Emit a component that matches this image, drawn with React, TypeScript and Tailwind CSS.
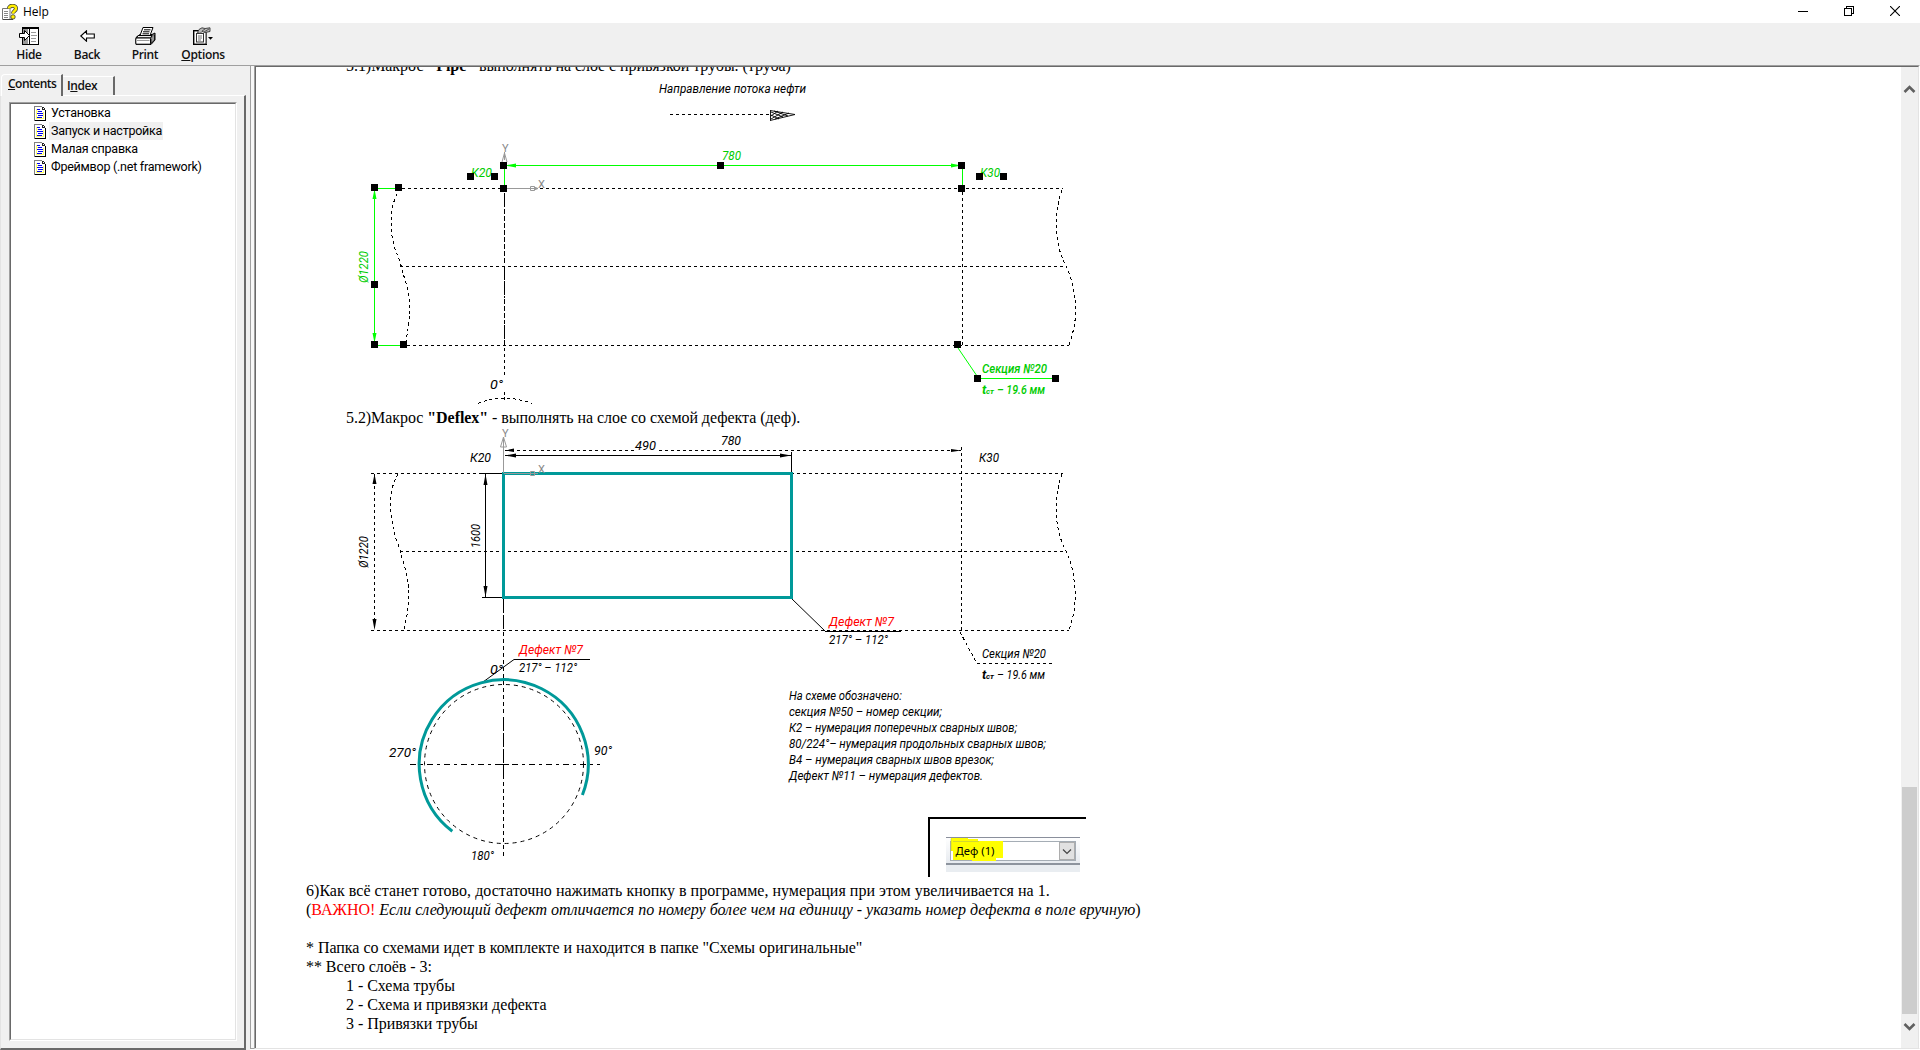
import React from "react";

const cad = { fontFamily: 'Roboto, "Liberation Sans", sans-serif' };

type LabelProps = {
  x: number;
  y: number;
  w: number;
  children: React.ReactNode;
  fill?: string;
  bold?: boolean;
  size?: number;
  transform?: string;
};

function Label({ x, y, w, children, fill = "#000", bold, size = 12.5, transform }: LabelProps) {
  return (
    <text
      x={x}
      y={y}
      textLength={w}
      lengthAdjust="spacingAndGlyphs"
      fill={fill}
      fontSize={size}
      fontStyle="italic"
      fontWeight={bold ? 500 : 400}
      transform={transform}
      style={cad}
    >
      {children}
    </text>
  );
}

function Handle({ x, y }: { x: number; y: number }) {
  return <rect x={x - 3.5} y={y - 3.5} width="7" height="7" fill="#000" shapeRendering="crispEdges" />;
}

function ThicknessLabel({ x, y, fill = "#000", bold }: { x: number; y: number; fill?: string; bold?: boolean }) {
  return (
    <g>
      <text x={x} y={y} fill={fill} fontSize="13" fontStyle="italic" fontWeight="700" style={cad}>t</text>
      <text x={x + 4} y={y} fill={fill} fontSize="7" fontStyle="italic" fontWeight="700" textLength="8" lengthAdjust="spacingAndGlyphs" style={cad}>ст</text>
      <Label x={x + 15} y={y} w={48} fill={fill} bold={bold}>– 19.6 мм</Label>
    </g>
  );
}

const handles = [
  [503.5, 165.5], [503.5, 188.5], [720.5, 165.5], [961.5, 165.5], [961.5, 188.5],
  [979.5, 176.5], [1003.5, 176.5], [470.5, 176.5], [494.5, 176.5], [374.5, 187.5],
  [398.5, 187.5], [374.5, 284.5], [374.5, 344.5], [403.5, 344.5], [957.5, 344.5],
  [977.5, 378.5], [1055.5, 378.5],
];

const G = "#00ff00";
const GT = "#00cc00";

function PipeDrawing() {
  return (
    <svg className="block ml-[84px]" width="760" height="333" viewBox="340 75 760 333">
      <Label x={659} y={93} w={147}>Направление потока нефти</Label>
      <g stroke="#000" fill="none" strokeDasharray="3 3" shapeRendering="crispEdges">
        <path d="M670 114.5H770" />
        <path d="M402 188.5H1063M400 266.5H1066M407 345.5H1069" />
        <path d="M962.5 192V345M504.5 348V376" />
        <path d="M397 194C389 210 389 235 397 254C402 266 403 275 407 286C412 305 410 318 406 341" />
        <path d="M1062 190C1053 215 1055 243 1064 262C1068 270 1071 277 1073 288C1077 307 1077 322 1069 345" />
        <path d="M478 403.5Q504 393 532 403.5" />
      </g>
      <path d="M504.5 193V208M504.5 266V298M504.5 325V346" stroke="#000" strokeDasharray="14 1" shapeRendering="crispEdges" />
      <path d="M504.5 209V265M504.5 299V324" stroke="#000" strokeDasharray="5 2" shapeRendering="crispEdges" />
      <path d="M504.5 392V400" stroke="#000" strokeDasharray="3 2" shapeRendering="crispEdges" />
      <path d="M770.5 110.5V120.5M770 110.5L795 114.5L770 120.5M771 112L783 117M771 119L783 112M774 111L788 116M775 119L789 113M771 115L779 119M771 116L778 111" stroke="#000" fill="none" strokeWidth=".9" />
      <g stroke="#999" fill="none">
        <path d="M504.5 160V152M502 162L504.5 153L507 162M504 188.5H538M530.5 186.5H534.5V190.5H530.5Z" />
        <path d="M534 187L538 188.5L534 190" fill="#999" />
      </g>
      <text x="502" y="152" fontSize="11" fill="#888" style={cad}>Y</text>
      <text x="538" y="188" fontSize="11" fill="#888" style={cad}>X</text>
      <g stroke={G} fill="none" shapeRendering="crispEdges">
        <path d="M504 165.5H961M504.5 165V188M962.5 165V188M374.5 188V344M374 188.5H398M374 345.5H403" />
      </g>
      <path d="M958 348L977 376" stroke={G} />
      <path d="M977 378.5H1055" stroke={G} shapeRendering="crispEdges" />
      <path d="M505 165.5L516 163.5V167.5ZM961 165.5L951 163.5V167.5ZM374.5 189L372.5 199H376.5ZM374.5 343L372.5 333H376.5Z" fill={G} />
      <Label x={722} y={160} w={19} fill={GT}>780</Label>
      <Label x={471} y={177} w={21} fill={GT}>К20</Label>
      <Label x={980} y={177} w={20} fill={GT}>К30</Label>
      <Label x={0} y={0} w={32} fill={GT} transform="translate(368 283) rotate(-90)">Ø1220</Label>
      <Label x={982} y={373} w={65} fill={GT} bold>Секция №20</Label>
      <ThicknessLabel x={982} y={394} fill={GT} bold />
      <Label x={490} y={389} w={13}>0°</Label>
      {handles.map(([x, y]) => (
        <Handle key={`${x}-${y}`} x={x} y={y} />
      ))}
    </svg>
  );
}

const notes: [string, number][] = [
  ["На схеме обозначено:", 113],
  ["секция №50 – номер секции;", 153],
  ["К2 – нумерация поперечных сварных швов;", 228],
  ["80/224°– нумерация продольных сварных швов;", 257],
  ["В4 – нумерация сварных швов врезок;", 205],
  ["Дефект №11 – нумерация дефектов.", 194],
];

function DefectDrawing() {
  return (
    <svg className="block ml-[84px]" width="760" height="454" viewBox="340 427 760 454">
      <defs>
        <linearGradient id="strip" x1="0" y1="0" x2="0" y2="1">
          <stop offset="0" stopColor="#ffffff" />
          <stop offset="1" stopColor="#e6eaef" />
        </linearGradient>
      </defs>
      <g stroke="#000" fill="none" strokeDasharray="3 3" shapeRendering="crispEdges">
        <path d="M505 450.5H634M659 450.5H961M961.5 447V631" />
        <path d="M371 473.5H1063M400 551.5H1065M371 630.5H1069M374.5 474V630" />
        <path d="M398 474C388 490 389 515 396 539C401 550 402 560 405 568C411 590 410 602 404 630" />
        <path d="M1062 474C1053 499 1055 528 1064 547C1068 555 1071 562 1073 573C1076 592 1077 607 1069 630" />
        <path d="M960 632L977 663.5M977 663.5H1052" />
        <path d="M503.5 632V715M503.5 775V858" strokeDasharray="4 3" />
        <path d="M410 764.5H600" strokeDasharray="6 4 3 4" />
      </g>
      <circle cx="504" cy="764" r="79.5" fill="none" stroke="#000" strokeDasharray="4 4" />
      <path d="M503.5 599V630M503.5 717V775" stroke="#000" strokeDasharray="14 2" shapeRendering="crispEdges" />
      <g stroke="#000" fill="none" shapeRendering="crispEdges">
        <path d="M505 455.5H791M791.5 452V473M485.5 474V597M482 473.5H503M482 597.5H503M825 631.5H901M514 659.5H590M498 764.5H509" />
      </g>
      <path d="M791 598L825 631M483 682L514 659.5" stroke="#000" />
      <g fill="#000">
        <path d="M505 455.5L516 453.5V457.5ZM791 455.5L780 453.5V457.5ZM505 450.5L514 448.5V452ZM961 450.5L951 449V452ZM485.5 474L483.5 485H487.5ZM485.5 597L483.5 586H487.5ZM374.5 474L372.5 484H376.5ZM374.5 630L372.5 619H376.5Z" />
      </g>
      <rect x="503.5" y="473.5" width="288" height="124" fill="none" stroke="#009999" strokeWidth="3" />
      <path d="M582.4 795A84.5 84.5 0 1 0 452.3 831.3" fill="none" stroke="#009999" strokeWidth="3" />
      <g stroke="#999" fill="none">
        <path d="M503.5 438V473M500.5 447L503.5 437L506.5 447ZM504 473.5H538M530.5 471.5H534.5V475.5H530.5Z" />
      </g>
      <text x="502" y="437" fontSize="11" fill="#888" style={cad}>Y</text>
      <text x="538" y="473" fontSize="11" fill="#888" style={cad}>X</text>
      <Label x={635} y={450} w={21}>490</Label>
      <Label x={721} y={445} w={20}>780</Label>
      <Label x={470} y={462} w={21}>К20</Label>
      <Label x={979} y={462} w={20}>К30</Label>
      <Label x={0} y={0} w={32} transform="translate(368 568) rotate(-90)">Ø1220</Label>
      <Label x={0} y={0} w={24} transform="translate(480 548) rotate(-90)">1600</Label>
      <Label x={829} y={626} w={65} fill="#ff0000">Дефект №7</Label>
      <Label x={829} y={644} w={59}>217° – 112°</Label>
      <Label x={519} y={654} w={64} fill="#ff0000">Дефект №7</Label>
      <Label x={519} y={672} w={58}>217° – 112°</Label>
      <Label x={490} y={674} w={13}>0°</Label>
      <Label x={389} y={757} w={27}>270°</Label>
      <Label x={594} y={755} w={18}>90°</Label>
      <Label x={471} y={860} w={23}>180°</Label>
      <Label x={982} y={658} w={64}>Секция №20</Label>
      <ThicknessLabel x={982} y={679} />
      {notes.map(([t, w], i) => (
        <Label key={t} x={789} y={700 + i * 16} w={w}>{t}</Label>
      ))}
      <path d="M929 877V818H1086" stroke="#000" strokeWidth="2" fill="none" />
      <rect x="946" y="837" width="134" height="27" fill="url(#strip)" />
      <rect x="946" y="865" width="134" height="7" fill="#e9edf1" />
      <path d="M946 837.5H1080" stroke="#8a8f9c" />
      <path d="M946 864H1080" stroke="#8d949e" strokeWidth="2" />
      <rect x="950.5" y="841.5" width="125" height="19" fill="#fff" stroke="#a5adb5" />
      <path d="M951 838H968V839H978V841H1003V858H996V861H972V860H953V851H951Z" fill="#ffff00" />
      <path d="M951 838.5V851M953 841.5H979" stroke="#b6bd50" strokeWidth=".6" />
      <rect x="1059.5" y="842.5" width="15" height="17" fill="#e1e1e1" stroke="#adadad" />
      <path d="M1063 849.5L1067 853.5L1071 849.5" fill="none" stroke="#444" strokeWidth="1.2" />
      <text x="955.5" y="855" fontSize="11.5" textLength="39" lengthAdjust="spacingAndGlyphs" fill="#000" style={{ fontFamily: '"Noto Sans", sans-serif' }}>Деф (1)</text>
    </svg>
  );
}

function PageIcon() {
  return (
    <svg width="12" height="15" viewBox="0 0 12 15" shapeRendering="crispEdges" className="block shrink-0">
      <path d="M0 0H8L12 4V15H0Z" fill="#fff" />
      <path d="M.5 15V.5H8" stroke="#808080" fill="none" />
      <path d="M11.5 4V14.5H1" stroke="#000" fill="none" />
      <path d="M8.5 1V3.5H11M9 1.5H10M10 2.5H11" stroke="#222" fill="none" />
      <path d="M2 3.5H6M2 5.5H4M2 12.5H10M2.5 4V12M9.5 6V12" stroke="#ffff66" fill="none" />
      <path d="M3 3.5H6M4 5.5H8M3 7.5H9M4 9.5H9M3 11.5H8" stroke="#0000ee" />
    </svg>
  );
}

function TreeItem({ label, selected, width }: { label: string; selected?: boolean; width: string }) {
  return (
    <div className="flex h-[18px] items-center pl-[23px]">
      <PageIcon />
      <span
        className={`ml-[3px] flex h-[18px] items-center whitespace-nowrap pl-[2px] text-[12.5px] leading-[18px] tracking-[-0.24px] text-black ${width} ${selected ? "bg-[#f0f0f0]" : ""}`}
      >
        {label}
      </span>
    </div>
  );
}

function HelpIcon() {
  return (
    <svg width="16" height="16" viewBox="0 0 16 16" className="block shrink-0">
      <path d="M.5 4.5H8V15.5H.5Z" fill="#fff" stroke="#777" />
      <path d="M2 7.5H6M2 9.5H6M2 11.5H6M2 13.5H6" stroke="#888" />
      <path d="M1 15.5H11" stroke="#444" />
      <path d="M7 4.6C7 2.8 8.6 1.8 10.6 1.8S14 3 14 4.6C14 7 11 7 11 9.4" fill="none" stroke="#333" strokeWidth="4" />
      <path d="M7 4.6C7 2.8 8.6 1.8 10.6 1.8S14 3 14 4.6C14 7 11 7 11 9.4" fill="none" stroke="#ffee00" strokeWidth="2.6" />
      <circle cx="11" cy="12.9" r="2.2" fill="#ffee00" stroke="#333" strokeWidth=".8" />
    </svg>
  );
}

function HideIcon() {
  return (
    <svg width="20" height="18" viewBox="0 0 20 18" shapeRendering="crispEdges" className="block">
      <rect x="3.5" y=".5" width="16" height="17" fill="#fff" stroke="#000" />
      <rect x="4" y="1" width="5" height="16" fill="#999" />
      <path d="M3 1.5H20M10.5 2V17" stroke="#000" />
      <path d="M12 5.5H17M12 8.5H18M12 11.5H17M12 14.5H17" stroke="#999" />
      <path d="M.5 6.5H5.5V3.5L10.5 8.5L5.5 13.5V10.5H.5Z" fill="#fff" stroke="#000" shapeRendering="auto" />
    </svg>
  );
}

function BackIcon() {
  return (
    <svg width="15" height="12" viewBox="0 0 15 12" className="block">
      <path d="M.8 6L6.5 .8V4H14.3V8H6.5V11.2Z" fill="#fff" stroke="#000" strokeWidth="1.1" />
    </svg>
  );
}

function PrintIcon() {
  return (
    <svg width="21" height="18" viewBox="0 0 21 18" className="block">
      <path d="M1 10.5L5 7.5H17L20 6V13L16 17.5H1Z" fill="#777" stroke="#000" />
      <path d="M5 8.5L8 .5H18L15 8.5Z" fill="#fff" stroke="#000" />
      <path d="M9 2.8H15.5M8 4.8H14.5M7.5 6.8H14" stroke="#000" />
      <path d="M3 8.5H17L15.5 11H1.5Z" fill="#eee" stroke="#000" />
      <rect x=".8" y="11" width="14.7" height="6.2" rx="1" fill="#fff" stroke="#000" />
      <path d="M2 13.5H14.5" stroke="#999" />
      <path d="M16 12V16.5L19.5 13V8" fill="#999" stroke="#000" strokeWidth=".8" />
    </svg>
  );
}

function OptionsIcon() {
  return (
    <svg width="20" height="18" viewBox="0 0 20 18" className="block">
      <rect x=".7" y="3.7" width="12.6" height="13.6" fill="#fff" stroke="#000" strokeWidth="1.4" />
      <rect x="3.5" y="6.5" width="7" height="8.5" fill="#fff" stroke="#333" />
      <path d="M5 9H9M5 11H9M5 13H8" stroke="#777" />
      <path d="M13.5 4V17" stroke="#555" />
      <path d="M4.5 5.5L6 2.5L9 .8L12 1.5L17 .8V4.5L12 5.5L9 4.5L7 6.5Z" fill="#bbb" stroke="#333" strokeWidth=".9" />
      <path d="M9 4L12 2M11 5L16 2" stroke="#555" />
      <path d="M15 10H20L17.5 12.8Z" fill="#000" />
    </svg>
  );
}

function ToolButton({ icon, children }: { icon: React.ReactNode; children: React.ReactNode }) {
  return (
    <div className="flex w-[58px] flex-col items-center">
      <div className="flex h-[18px] items-center">{icon}</div>
      <span className="mt-[2px] text-[12px] font-semibold leading-[16px] tracking-[-0.35px] text-[#111]">{children}</span>
    </div>
  );
}

function WindowButtons() {
  return (
    <div className="ml-auto mr-[20px] flex -translate-y-px items-center gap-[36px]">
      <svg width="10" height="10" viewBox="0 0 10 10" shapeRendering="crispEdges"><path d="M0 5.5H10" stroke="#000" /></svg>
      <svg width="10" height="10" viewBox="0 0 10 10" shapeRendering="crispEdges"><path d="M.5 2.5H7.5V9.5H.5ZM2.5 2V.5H9.5V7.5H8" fill="none" stroke="#000" /></svg>
      <svg width="10" height="10" viewBox="0 0 10 10"><path d="M0 0L10 10M10 0L0 10" stroke="#000" strokeWidth="1.1" /></svg>
    </div>
  );
}

function Sidebar() {
  return (
    <div className="flex w-[250px] shrink-0 flex-col bg-[#f0f0f0] border-t border-t-[#a0a0a0] pt-[8px]">
      <div className="flex h-[21px] items-end pl-[1px] font-['Open_Sans',sans-serif] text-[12px] leading-[16px] text-[#111]">
        <div className="relative z-10 -mb-px flex h-[22px] w-[62px] items-center rounded-tl-sm border-l border-t border-l-white border-t-white border-r-2 border-r-[#696969] bg-[#f0f0f0] pl-[6px] pb-[3px] font-semibold tracking-[-0.5px]">
          <span><u>C</u>ontents</span>
        </div>
        <div className="flex h-[19px] w-[52px] items-center border-r-2 border-t border-r-[#696969] border-t-white pl-[4px] font-semibold tracking-[-0.4px]">
          <span>I<u>n</u>dex</span>
        </div>
      </div>
      <div className="mr-[4px] flex flex-1 border-2 border-l border-t border-l-[#e3e3e3] border-t-white border-r-[#696969] border-b-[#696969] pl-[8px] pr-[7px] pt-[6px] pb-[7px]">
        <div className="flex-1 border border-b-white border-r-white border-l-[#a0a0a0] border-t-[#a0a0a0]">
          <div className="h-full border border-b-[#e3e3e3] border-r-[#e3e3e3] border-l-[#696969] border-t-[#696969] bg-white font-[Roboto,sans-serif]">
            <TreeItem label="Установка" width="w-[63px]" />
            <TreeItem label="Запуск и настройка" selected width="w-[114px]" />
            <TreeItem label="Малая справка" width="w-[90px]" />
            <TreeItem label="Фреймвор (.net framework)" width="w-[156px]" />
          </div>
        </div>
      </div>
    </div>
  );
}

function Scrollbar() {
  return (
    <div className="flex w-[17px] shrink-0 flex-col items-center bg-[#f0f0f0]">
      <svg width="13" height="10" viewBox="0 0 13 10" className="mt-[17px] block"><path d="M1.5 8L6.5 3L11.5 8" fill="none" stroke="#606060" strokeWidth="2.6" /></svg>
      <div className="flex-1" />
      <div className="h-[227px] w-[15px] bg-[#cdcdcd]" />
      <svg width="13" height="10" viewBox="0 0 13 10" className="mt-[8px] mb-[16px] block"><path d="M1.5 2L6.5 7L11.5 2" fill="none" stroke="#606060" strokeWidth="2.6" /></svg>
    </div>
  );
}

export default function App() {
  return (
    <div className="flex h-[1050px] w-[1920px] flex-col overflow-hidden bg-white">
      <div className="flex h-[23px] shrink-0 items-center bg-white pl-[2px] font-['Open_Sans',sans-serif]">
        <HelpIcon />
        <span className="ml-[5px] text-[12px] leading-[16px] text-black">Help</span>
        <WindowButtons />
      </div>
      <div className="flex h-[42px] shrink-0 bg-[#f0f0f0] pt-[4px] font-['Open_Sans',sans-serif]">
        <ToolButton icon={<HideIcon />}>Hide</ToolButton>
        <ToolButton icon={<BackIcon />}>Back</ToolButton>
        <ToolButton icon={<PrintIcon />}>Print</ToolButton>
        <ToolButton icon={<OptionsIcon />}><u>O</u>ptions</ToolButton>
      </div>
      <div className="flex h-[985px]">
        <Sidebar />
        <div className="mb-px w-[4px] shrink-0 border-l border-b border-t border-[#a0a0a0] bg-[#f8f8f8]" />
        <div className="mb-px flex flex-1 border border-r-white border-b-[#e3e3e3] border-l-[#a0a0a0] border-t-[#a0a0a0]">
          <div className="flex flex-1 overflow-hidden border-l border-r border-t border-l-[#696969] border-r-[#e3e3e3] border-t-[#696969] bg-white">
            <div className="h-[981px] flex-1 overflow-hidden font-['Liberation_Serif',serif] text-[16px] leading-[19px] text-black whitespace-nowrap">
              <p className="-mt-[11px] pl-[90px] tracking-[-0.05px]">5.1)Макрос <b>"Pipe"</b> выполнять на слое с привязкой трубы. (труба)</p>
              <PipeDrawing />
              <p className="pl-[90px] tracking-[-0.06px]">5.2)Макрос <b>"Deflex"</b> - выполнять на слое со схемой дефекта (деф).</p>
              <DefectDrawing />
              <div className="pl-[50px]">
                <p className="tracking-[0.024px]">6)Как всё станет готово, достаточно нажимать кнопку в программе, нумерация при этом увеличивается на 1.</p>
                <p>(<span className="text-[#ff0000]">ВАЖНО!</span> <i>Если следующий дефект отличается по номеру более чем на единицу - указать номер дефекта в поле вручную</i>)</p>
                <p>&nbsp;</p>
                <p className="tracking-[-0.03px]">* Папка со схемами идет в комплекте и находится в папке "Схемы оригинальные"</p>
                <p className="tracking-[-0.05px]">** Всего слоёв - 3:</p>
                <div className="pl-[40px] tracking-[-0.04px]">
                  <p>1 - Схема трубы</p>
                  <p>2 - Схема и привязки дефекта</p>
                  <p>3 - Привязки трубы</p>
                </div>
              </div>
            </div>
            <Scrollbar />
          </div>
        </div>
      </div>
    </div>
  );
}
